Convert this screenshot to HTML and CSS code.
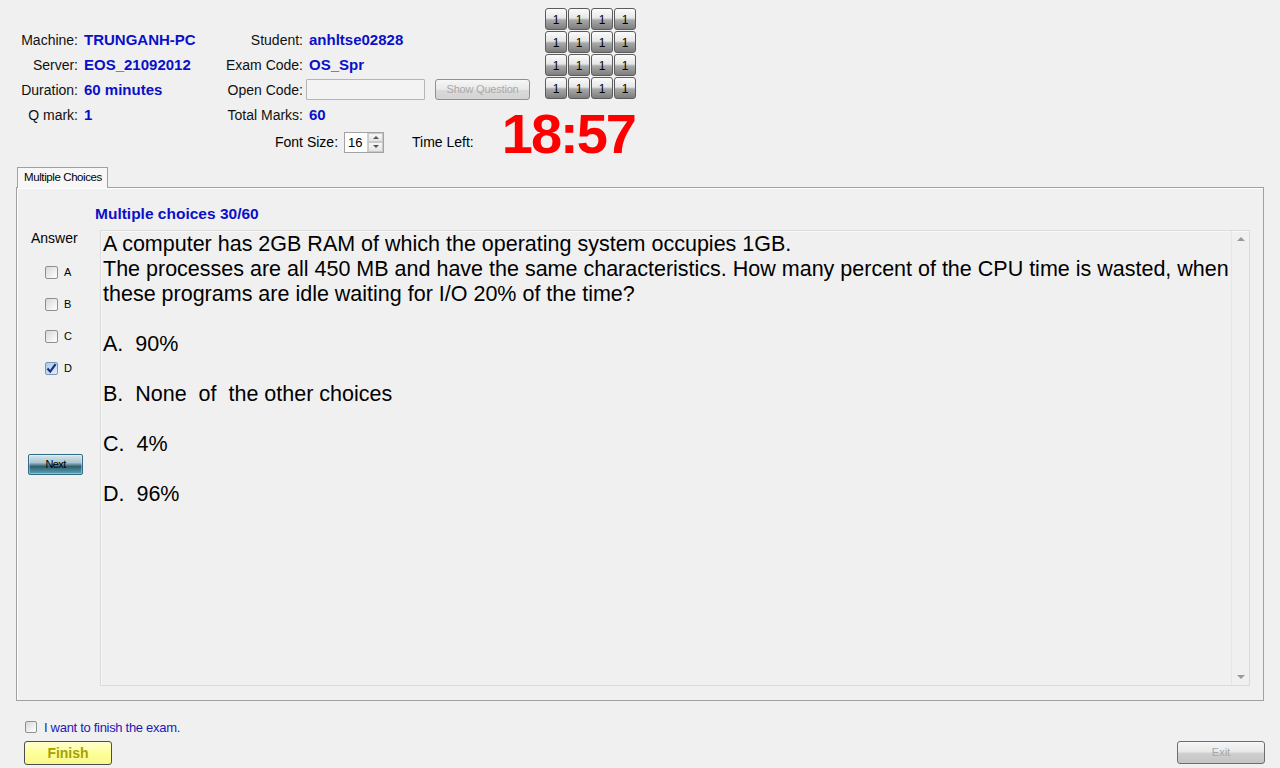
FILE: index.html
```html
<!DOCTYPE html>
<html>
<head>
<meta charset="utf-8">
<link rel="stylesheet" href="styles.css">
</head>
<body>
<div class="header">
  <div class="info">
    <div class="grid">
      <div class="lbl">Machine:</div><div class="val">TRUNGANH-PC</div>
      <div class="lbl lbl2">Student:</div><div class="val">anhltse02828</div>
      <div class="lbl">Server:</div><div class="val">EOS_21092012</div>
      <div class="lbl lbl2">Exam Code:</div><div class="val">OS_Spr</div>
      <div class="lbl">Duration:</div><div class="val">60 minutes</div>
      <div class="lbl lbl2">Open Code:</div>
      <div class="val opencode"><span class="textbox"></span><span class="btn-show">Show Question</span></div>
      <div class="lbl">Q mark:</div><div class="val">1</div>
      <div class="lbl lbl2">Total Marks:</div><div class="val">60</div>
    </div>
    <div class="row5">
      <span class="fs-label">Font Size:</span>
      <span class="spinner"><span class="spin-val">16</span><span class="spin-btns"><span class="spin-up"></span><span class="spin-down"></span></span></span>
      <span class="tl-label">Time Left:</span>
      <span class="timer">18:57</span>
    </div>
  </div>
  <div class="qgrid">
    <span class="qb">1</span><span class="qb">1</span><span class="qb">1</span><span class="qb">1</span>
    <span class="qb">1</span><span class="qb">1</span><span class="qb">1</span><span class="qb">1</span>
    <span class="qb">1</span><span class="qb">1</span><span class="qb">1</span><span class="qb">1</span>
    <span class="qb">1</span><span class="qb">1</span><span class="qb">1</span><span class="qb">1</span>
  </div>
</div>

<div class="tabs">
  <div class="tab">Multiple Choices</div>
  <div class="panel">
    <div class="mc-title">Multiple choices 30/60</div>
    <div class="mc-body">
      <div class="answers">
        <div class="ans-title">Answer</div>
        <div class="opts">
          <div class="opt"><span class="cb"></span><span class="opt-l">A</span></div>
          <div class="opt"><span class="cb"></span><span class="opt-l">B</span></div>
          <div class="opt"><span class="cb"></span><span class="opt-l">C</span></div>
          <div class="opt"><span class="cb checked"><svg width="11" height="11" viewBox="0 0 11 11"><path d="M1.5 5.5 L4.2 8.6 L9.6 1.2" fill="none" stroke="#1b2f7a" stroke-width="2.2"/></svg></span><span class="opt-l">D</span></div>
        </div>
        <div class="btn-next">Next</div>
      </div>
      <div class="question">
        <div class="qtext">
          <p>A computer has 2GB RAM of which the operating system occupies 1GB.</p>
          <p>The processes are all 450 MB and have the same characteristics. How many percent of the CPU time is wasted, when these programs are idle waiting for I/O 20% of the time?</p>
          <p class="gap">A.&nbsp; 90%</p>
          <p class="gap">B.&nbsp; None&nbsp; of&nbsp; the other choices</p>
          <p class="gap">C.&nbsp; 4%</p>
          <p class="gap">D.&nbsp; 96%</p>
        </div>
        <div class="vscroll">
          <span class="arr-up"></span>
          <span class="arr-down"></span>
        </div>
      </div>
    </div>
  </div>
</div>

<div class="finish-row"><span class="cb small"></span><span class="finish-text">I want to finish the exam.</span></div>
<div class="bottom-row">
  <div class="btn-finish">Finish</div>
  <div class="btn-exit">Exit</div>
</div>
</body>
</html>
```

FILE: styles.css
```css
html, body {
  margin: 0;
  padding: 0;
  background: #f0f0f0;
  font-family: "Liberation Sans", Arial, sans-serif;
  color: #000;
  width: 1280px;
  height: 768px;
  overflow: hidden;
}

.header {
  display: flex;
  padding: 8px 0 0 20px;
  height: 151px;
}

.info {
  width: 525px;
  flex: none;
  padding-top: 19px;
}

.grid {
  display: grid;
  grid-template-columns: 64px 136px 89px 236px;
  grid-auto-rows: 25px;
  align-items: center;
}

.lbl {
  text-align: right;
  padding-right: 6px;
  font-size: 14px;
  color: #111;
  white-space: nowrap;
}

.val {
  font-size: 15px;
  font-weight: bold;
  color: #0a10c8;
  white-space: nowrap;
}

.opencode {
  display: flex;
  align-items: center;
  margin-left: -3px;
}

.textbox {
  display: block;
  flex: none;
  width: 117px;
  height: 19px;
  border: 1px solid #b5b5b5;
  background: #f3f3f3;
  border-radius: 1px;
}

.btn-show {
  display: block;
  flex: none;
  margin-left: 10px;
  width: 93px;
  height: 19px;
  border: 1px solid #8f8f8f;
  border-radius: 3px;
  background: linear-gradient(#f6f6f6, #e8e8e8 50%, #dadada 51%, #d4d4d4);
  color: #a9a9a9;
  font-size: 11px;
  font-weight: normal;
  text-align: center;
  line-height: 19px;
  letter-spacing: -0.2px;
}

.row5 {
  display: flex;
  align-items: center;
  height: 28px;
  margin-top: 1px;
  font-size: 14px;
  white-space: nowrap;
}

.row5 > * {
  flex: none;
}

.fs-label {
  margin-left: 255px;
}

.spinner {
  display: flex;
  margin-left: 6px;
  width: 38px;
  height: 19px;
  border: 1px solid #a3a3a3;
  background: #fff;
}

.spin-val {
  flex: 1;
  font-size: 13px;
  line-height: 19px;
  padding-left: 3px;
}

.spin-btns {
  display: flex;
  flex-direction: column;
  width: 15px;
  border-left: 1px solid #d0d0d0;
}

.spin-up, .spin-down {
  flex: 1;
  display: flex;
  align-items: center;
  justify-content: center;
  background: linear-gradient(#f7f7f7, #e4e4e4);
  border: 1px solid #c9c9c9;
}

.spin-up::after {
  content: "";
  border-left: 3px solid transparent;
  border-right: 3px solid transparent;
  border-bottom: 3px solid #555;
}

.spin-down::after {
  content: "";
  border-left: 3px solid transparent;
  border-right: 3px solid transparent;
  border-top: 3px solid #555;
}

.tl-label {
  margin-left: 28px;
}

.timer {
  margin-left: 28px;
  margin-bottom: 16px;
  font-size: 56px;
  line-height: 44px;
  font-weight: bold;
  color: #ff0000;
  letter-spacing: -2px;
}

.qgrid {
  display: grid;
  grid-template-columns: repeat(4, 22px);
  grid-auto-rows: 22px;
  gap: 1px;
  align-self: flex-start;
}

.qb {
  display: block;
  box-sizing: border-box;
  border: 1px solid #5c5c5c;
  border-radius: 3px;
  background: linear-gradient(#fbfbfb, #e6e6e6 45%, #a9a9a9 55%, #7d7d7d);
  font-size: 12px;
  line-height: 22px;
  text-align: center;
  color: #000;
}

.tabs {
  margin: 8px 16px 0 16px;
}

.tab {
  display: inline-block;
  margin-left: 1px;
  padding: 0 5px 0 6px;
  height: 20px;
  line-height: 19px;
  font-size: 11.5px;
  letter-spacing: -0.4px;
  border: 1px solid #a0a0a0;
  border-bottom: none;
  background: #f7f7f7;
  position: relative;
  z-index: 1;
  margin-bottom: -1px;
}

.panel {
  box-sizing: border-box;
  height: 514px;
  border: 1px solid #a0a0a0;
  box-shadow: inset 1px 1px 0 #fff;
  padding-top: 18px;
}

.mc-title {
  padding-left: 78px;
  font-size: 15.5px;
  font-weight: bold;
  color: #0a10c8;
  line-height: 16px;
  margin-bottom: 8px;
}

.mc-body {
  display: flex;
}

.answers {
  width: 83px;
  flex: none;
}

.ans-title {
  font-size: 14px;
  line-height: 16px;
  padding-left: 14px;
}

.opts {
  margin-top: 10px;
}

.opt {
  display: flex;
  align-items: center;
  height: 32px;
  padding-left: 28px;
}

.cb {
  display: flex;
  align-items: center;
  justify-content: center;
  box-sizing: border-box;
  width: 13px;
  height: 13px;
  border: 1px solid #8e8f8f;
  border-radius: 2px;
  background: linear-gradient(135deg, #d8d8d8, #f4f4f4 70%, #fff);
}

.cb.checked {
  background: linear-gradient(135deg, #a9c9ea, #e2eefb);
  border-color: #7c96b6;
}

.opt-l {
  margin-left: 6px;
  font-size: 11px;
}

.btn-next {
  margin: 70px 0 0 11px;
  width: 53px;
  height: 19px;
  border: 1px solid #2f6b86;
  border-radius: 2px;
  background: linear-gradient(#d5e6ee, #a9c4cf 40%, #2f5f6e 60%, #5aa3b6);
  font-size: 11px;
  letter-spacing: -0.6px;
  text-align: center;
  line-height: 19px;
  color: #000;
  box-shadow: inset 0 0 0 1px rgba(255,255,255,0.35);
}

.question {
  flex: 1;
  margin-right: 13px;
  height: 456px;
  box-sizing: border-box;
  border: 1px solid #dadada;
  box-shadow: inset 1px 1px 0 #f8f8f8;
  display: flex;
}

.qtext {
  flex: 1;
  padding: 1px 0 0 2px;
  font-size: 21.5px;
  line-height: 25px;
}

.qtext p {
  margin: 0;
}

.qtext p.gap {
  margin-top: 25px;
}

.vscroll {
  width: 17px;
  flex: none;
  border-left: 1px solid #e6e6e6;
  display: flex;
  flex-direction: column;
  justify-content: space-between;
  align-items: center;
  padding: 6px 0;
}

.arr-up {
  border-left: 4px solid transparent;
  border-right: 4px solid transparent;
  border-bottom: 4px solid #9a9a9a;
}

.arr-down {
  border-left: 4px solid transparent;
  border-right: 4px solid transparent;
  border-top: 4px solid #9a9a9a;
}

.finish-row {
  display: flex;
  align-items: center;
  height: 16px;
  margin: 18px 0 0 25px;
}

.cb.small {
  width: 12px;
  height: 12px;
}

.finish-text {
  margin-left: 7px;
  font-size: 13px;
  letter-spacing: -0.3px;
  color: #1a1ab8;
}

.bottom-row {
  display: flex;
  justify-content: space-between;
  margin: 6px 15px 0 24px;
}

.btn-finish {
  box-sizing: border-box;
  width: 88px;
  height: 24px;
  border: 1px solid #4d4d4d;
  border-radius: 3px;
  background: linear-gradient(#ffffd0, #ffff9a 50%, #f7f78c);
  color: #a3a300;
  font-size: 14px;
  font-weight: bold;
  text-align: center;
  line-height: 22px;
}

.btn-exit {
  box-sizing: border-box;
  width: 88px;
  height: 23px;
  border: 1px solid #6e6e6e;
  border-radius: 3px;
  background: linear-gradient(#f6f6f6, #e9e9e9 45%, #cfcfcf 55%, #c4c4c4);
  color: #a8a8a8;
  font-size: 11px;
  text-align: center;
  line-height: 21px;
}
```
